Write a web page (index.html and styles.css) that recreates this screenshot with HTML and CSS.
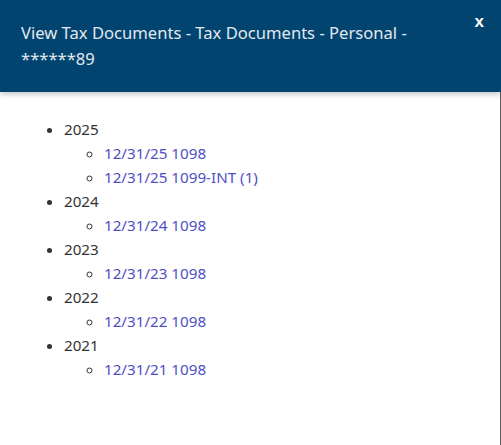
FILE: index.html
```html
<!DOCTYPE html>
<html>
<head>
<meta charset="utf-8">
<link rel="stylesheet" href="styles.css">
</head>
<body>
<div class="modal">
  <header class="modal-header">
    <h4 class="modal-title">View Tax Documents - Tax Documents - Personal - ******89</h4>
    <button class="close" type="button">x</button>
  </header>
  <div class="modal-body">
    <ul class="years">
      <li>2025
        <ul class="docs">
          <li><a href="#">12/31/25 1098</a></li>
          <li><a href="#">12/31/25 1099-INT (1)</a></li>
        </ul>
      </li>
      <li>2024
        <ul class="docs">
          <li><a href="#">12/31/24 1098</a></li>
        </ul>
      </li>
      <li>2023
        <ul class="docs">
          <li><a href="#">12/31/23 1098</a></li>
        </ul>
      </li>
      <li>2022
        <ul class="docs">
          <li><a href="#">12/31/22 1098</a></li>
        </ul>
      </li>
      <li>2021
        <ul class="docs">
          <li><a href="#">12/31/21 1098</a></li>
        </ul>
      </li>
    </ul>
  </div>
</div>
</body>
</html>
```
FILE: styles.css
```css
html, body {
  margin: 0;
  padding: 0;
  background: #ffffff;
}
body {
  font-family: "Noto Sans", "Open Sans", sans-serif;
}
.modal {
  width: 501px;
  height: 445px;
  display: flex;
  flex-direction: column;
}
.modal-header {
  position: relative;
  z-index: 1;
  display: flex;
  align-items: flex-start;
  height: 92px;
  box-sizing: border-box;
  padding: 20px 17px 0 21px;
  background: #01446f;
  box-shadow: 0 2px 6px rgba(0, 0, 0, 0.25);
}
.modal-title {
  flex: 1;
  margin: 0;
  max-width: 420px;
  font-size: 16.6px;
  font-weight: 400;
  line-height: 26px;
  color: #e3e9ef;
}
.close {
  margin-left: auto;
  margin-top: -10px;
  padding: 0;
  border: 0;
  background: transparent;
  color: #ffffff;
  font-family: "Liberation Sans", Arial, sans-serif;
  font-size: 17px;
  font-weight: 700;
  line-height: 24px;
}
.modal-body {
  flex: 1;
  padding: 25px 0 0 24px;
  border-right: 1px solid #5c5c5c;
  color: #333333;
  font-size: 15.2px;
  line-height: 24px;
}
.years {
  margin: 0;
  padding-left: 40px;
  list-style: disc;
}
.docs {
  margin: 0;
  padding-left: 40px;
  list-style: circle;
}
.docs a {
  color: #4f4fc6;
  text-decoration: none;
}
```
